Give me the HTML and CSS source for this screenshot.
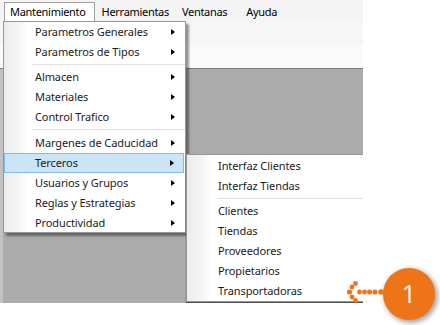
FILE: index.html
```html
<!DOCTYPE html>
<html>
<head>
<meta charset="utf-8">
<title>Mantenimiento</title>
<link rel="stylesheet" href="styles.css">
</head>
<body>
<div class="app">
	<div class="menubar">
		<span class="top on">Mantenimiento</span>
		<span class="top">Herramientas</span>
		<span class="top">Ventanas</span>
		<span class="top">Ayuda</span>
	</div>
	<div class="toolbar"></div>
	<div class="toolbar light"></div>
	<div class="work"></div>

	<ul class="menu main">
		<li class="sub">Parametros Generales</li>
		<li class="sub">Parametros de Tipos</li>
		<li class="sep"></li>
		<li class="sub">Almacen</li>
		<li class="sub">Materiales</li>
		<li class="sub">Control Trafico</li>
		<li class="sep big"></li>
		<li class="sub">Margenes de Caducidad</li>
		<li class="sub hot">Terceros</li>
		<li class="sub">Usuarios y Grupos</li>
		<li class="sub">Reglas y Estrategias</li>
		<li class="sub">Productividad</li>
	</ul>

	<ul class="menu side">
		<li>Interfaz Clientes</li>
		<li>Interfaz Tiendas</li>
		<li class="sep"></li>
		<li>Clientes</li>
		<li>Tiendas</li>
		<li>Proveedores</li>
		<li>Propietarios</li>
		<li>Transportadoras</li>
	</ul>
</div>

<svg class="callout" width="100" height="70" viewBox="0 0 100 70">
	<defs>
		<filter id="sh" x="-40%" y="-40%" width="180%" height="180%">
			<feGaussianBlur stdDeviation="2.5"/>
		</filter>
	</defs>
	<circle cx="71" cy="31" r="27" fill="#000" opacity="0.35" filter="url(#sh)"/>
	<circle cx="69" cy="29" r="26" fill="#ee7417"/>
	<g fill="#ee7417">
		<circle cx="41" cy="27" r="2.8"/>
		<circle cx="35" cy="27" r="2.6"/>
		<circle cx="29.5" cy="27" r="2.5"/>
		<circle cx="24.5" cy="27" r="2.4"/>
		<circle cx="19.5" cy="27" r="2.4"/>
		<circle cx="9.5" cy="27" r="2.6"/>
		<circle cx="12" cy="22" r="2.4"/>
		<circle cx="15.5" cy="18.5" r="2.4"/>
		<circle cx="12" cy="32" r="2.4"/>
		<circle cx="15.5" cy="35.5" r="2.4"/>
	</g>
	<text x="69" y="38" fill="#fff" font-family="Open Sans, sans-serif" font-size="25" text-anchor="middle">1</text>
</svg>
</body>
</html>
```

FILE: styles.css
```css
*{margin:0; padding:0; list-style:none; box-sizing:border-box;}
body{background:#fff; font-family:"Noto Sans", "Open Sans", sans-serif; font-size:11px; color:#1b1b1b;}
.app{position:relative; width:363px; height:303px; overflow:hidden; display:flex; flex-direction:column;}
.menubar{height:22px; background:#f4f4f4; display:flex; align-items:flex-end; padding-left:4px;}
.menubar .top{height:20px; line-height:18px; padding:0 6px; border:1px solid transparent; border-bottom:0; color:#000; letter-spacing:-0.3px;}
.menubar .top.on{background:#fff; border-color:#a0a0a0; padding:0 8px 0 5px;}
.menubar .top:nth-child(3){padding-left:5px;}
.menubar .top:nth-child(4){padding-left:11px;}
.toolbar{height:23px; background:#f6f6f6;}
.toolbar.light{background:#fafafa; border-bottom:1px solid #7d7d7d; height:24px;}
.work{flex:1; background:#ababab; border-left:3px solid #c2c2c2;}

.menu{position:absolute; background:#fff; border:1px solid #979797; box-shadow:3px 3px 2px rgba(0,0,0,0.4);}
.menu::before{content:""; position:absolute; left:0; top:0; bottom:0; width:22px; background:linear-gradient(to right,#ececec,#f4f4f4 60%,#fbfbfb);}
.menu li{position:relative; height:20px; display:flex; align-items:center; padding-left:31px; padding-bottom:1px; letter-spacing:-0.1px;}
.menu li.sub::after{content:""; position:absolute; right:10px; top:7px; border-left:4px solid #000; border-top:3.5px solid transparent; border-bottom:3.5px solid transparent;}
.menu li.sep{padding:0; margin-left:28px; border-top:1px solid #e0e0e0; margin-top:2px; height:3px;}
.menu li.sep.big{height:4px;}
.menu li.hot{background:#cce4f7; border:1px solid #7fb9ef; padding-left:30px; margin-right:1px;}
.menu li.hot::after{right:9px; top:6px;}

.main{left:3px; top:21px; width:183px; height:212px;}
.side{left:186px; top:154px; width:200px; height:148px; padding-top:1px; box-shadow:0 2px 1px rgba(0,0,0,0.55);}
.side li{padding-left:31px;}
.side li.sep{margin-left:31px;}

.callout{position:absolute; left:340px; top:265px;}
```
